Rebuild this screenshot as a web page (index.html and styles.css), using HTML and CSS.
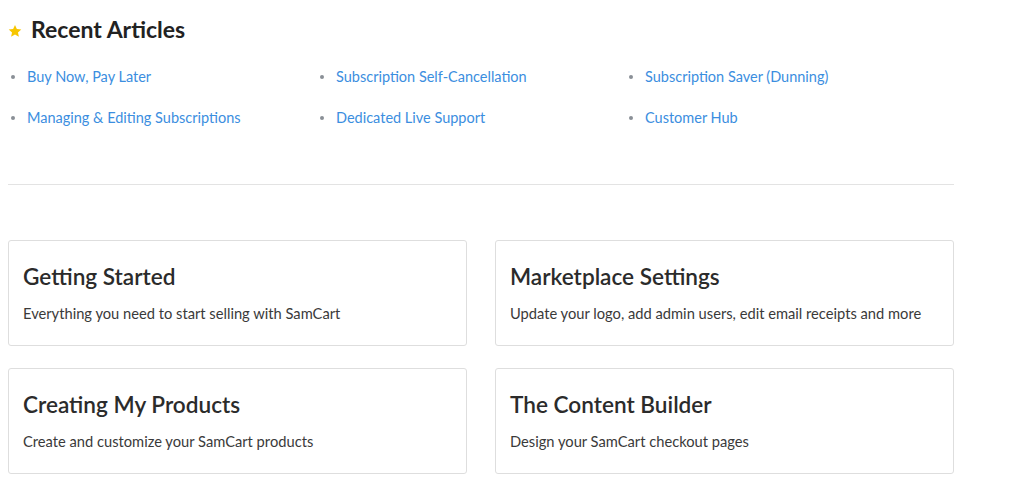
FILE: index.html
```html
<!DOCTYPE html>
<html lang="en">
<head>
  <meta charset="UTF-8">
  <meta name="viewport" content="width=device-width, initial-scale=1.0">
  <title>Recent Articles</title>
  <link rel="stylesheet" href="styles.css">
</head>
<body>
  <div class="page">
    <section class="recent">
      <h2 class="recent-title">
        <svg class="star" viewBox="0 0 24 24" width="14" height="14"><path d="M12 1.5l3.2 7 7.6.8-5.7 5.1 1.6 7.5L12 18l-6.7 3.9 1.6-7.5L1.2 9.3l7.6-.8z" fill="#f7c600"/></svg>
        Recent Articles
      </h2>
      <ul class="article-list">
        <li><a href="#">Buy Now, Pay Later</a></li>
        <li><a href="#">Subscription Self-Cancellation</a></li>
        <li><a href="#">Subscription Saver (Dunning)</a></li>
        <li><a href="#">Managing &amp; Editing Subscriptions</a></li>
        <li><a href="#">Dedicated Live Support</a></li>
        <li><a href="#">Customer Hub</a></li>
      </ul>
    </section>
    <hr class="divider">
    <section class="categories">
      <a class="card" href="#">
        <h3>Getting Started</h3>
        <p>Everything you need to start selling with SamCart</p>
      </a>
      <a class="card" href="#">
        <h3>Marketplace Settings</h3>
        <p>Update your logo, add admin users, edit email receipts and more</p>
      </a>
      <a class="card" href="#">
        <h3>Creating My Products</h3>
        <p>Create and customize your SamCart products</p>
      </a>
      <a class="card" href="#">
        <h3>The Content Builder</h3>
        <p>Design your SamCart checkout pages</p>
      </a>
    </section>
  </div>
</body>
</html>
```

FILE: styles.css
```css
body {
  font-family: Lato, "Open Sans", Arial, sans-serif;
  background-color: #fff;
  color: #333;
  margin: 0;
  padding: 0 8px;
}
.page {
  width: 946px;
}
.recent-title {
  display: flex;
  align-items: center;
  gap: 9px;
  margin: 15px 0 0;
  font-size: 23px;
  font-weight: 700;
  color: #222;
  line-height: 28px;
}
.star {
  margin-top: 4px;
}
.article-list {
  display: grid;
  grid-template-columns: 309px 309px 1fr;
  row-gap: 19px;
  list-style: none;
  margin: 23px 0 0;
  padding: 0;
}
.article-list li {
  display: flex;
  align-items: center;
  font-size: 14.5px;
  line-height: 22px;
}
.article-list li::before {
  content: "";
  width: 4px;
  height: 4px;
  border-radius: 50%;
  background-color: #8a8f96;
  margin: 0 12px 0 3px;
}
.article-list a {
  color: #3b8ee0;
  text-decoration: none;
}
.divider {
  border: none;
  border-top: 1px solid #e3e3e3;
  margin: 55px 0 0;
}
.categories {
  display: grid;
  grid-template-columns: 1fr 1fr;
  column-gap: 28px;
  row-gap: 22px;
  margin-top: 55px;
}
.card {
  display: block;
  height: 106px;
  box-sizing: border-box;
  padding: 22px 14px;
  border: 1px solid #dedede;
  border-radius: 3px;
  text-decoration: none;
  color: #333;
}
.card h3 {
  margin: 0;
  font-size: 22.6px;
  font-weight: 600;
  line-height: 28px;
  color: #2b2b2b;
}
.card p {
  margin: 12px 0 0;
  font-size: 14.7px;
  line-height: 20px;
  color: #3a3a3a;
}
```
